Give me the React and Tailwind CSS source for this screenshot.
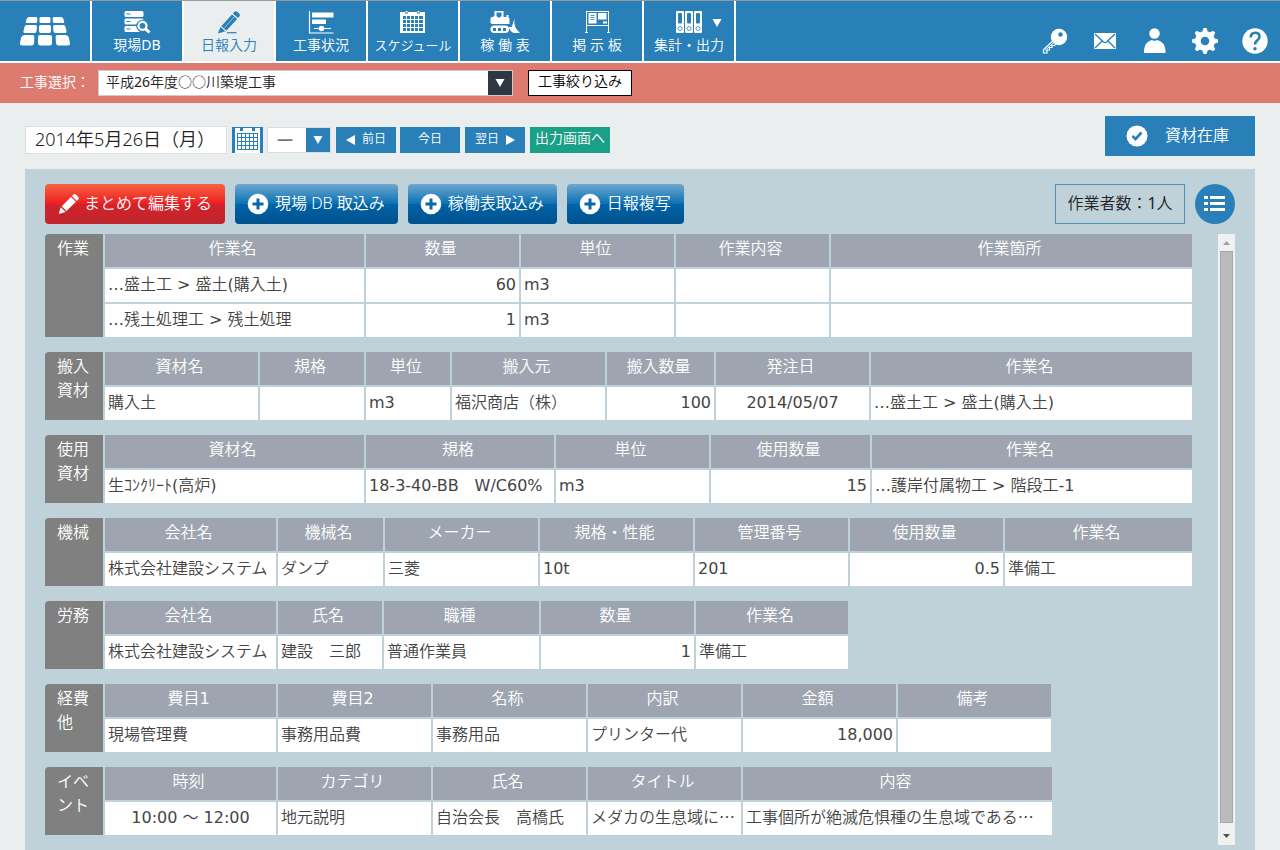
import { useState } from 'react';

const LogoIcon = () => (
  <svg width="52" height="32" viewBox="0 0 52 32" fill="#fff">
    <path d="M10 2h7q1.500 0 1.400 1.500l-.4 3.500q-.1 1-1.200 1H8q-1.600 0-1.200-1.500l1-3Q8.400 2 10 2z" />
    <path d="M22 2h8q1.500 0 1.500 1.500V7q0 1-1.500 1h-8q-1.500 0-1.500-1V3.500Q20.500 2 22 2z" />
    <path d="M35 2h7q1.600 0 2.200 1.500l1 3q.4 1.500-1.200 1.500h-8.800q-1.100 0-1.200-1l-.4-3.500Q33.500 2 35 2z" />
    <path d="M7.500 10h9q1.500 0 1.400 1.500l-.3 4.500q-.1 2-2 2H6.500q-2.500 0-2-2l1-4Q6 10 7.500 10z" />
    <path d="M21.500 10h9q1.500 0 1.500 1.500V16q0 2-2 2h-8q-2 0-2-2v-4.500q0-1.500 1.500-1.500z" />
    <path d="M35.500 10h9q1.500 0 2 2l1 4q.5 2-2 2h-9.100q-1.900 0-2-2l-.3-4.500q-.1-1.500 1.400-1.500z" />
    <path d="M5.500 20h8q2 0 1.900 2l-.4 6q-.2 2.500-2.500 2.500h-9Q.6 30.500 1 28l1.200-5.500Q3 20 5.500 20z" />
    <path d="M21 20h10q2 0 2 2v6q0 2.500-2.500 2.500h-9Q19 30.500 19 28v-6q0-2 2-2z" />
    <path d="M38.500 20h8q2.500 0 3.300 2.500L51 28q.4 2.500-2.500 2.500h-9q-2.300 0-2.500-2.500l-.4-6q-.1-2 1.900-2z" />
  </svg>
);

const DatabaseIcon = () => (
  <svg width="32" height="24" viewBox="0 0 32 24" fill="#fff">
    <rect x="3.500" y="1" width="19" height="6" rx="1.500" />
    <rect x="3.500" y="8.500" width="19" height="6" rx="1.500" />
    <rect x="3.500" y="16" width="19" height="6" rx="1.500" />
    <path d="M5.500 4h4M5.500 11.500h4M5.500 19h4" stroke="#2980b9" />
    <circle cx="21.500" cy="16" r="6.300" fill="#2980b9" />
    <circle cx="21.500" cy="15.800" r="4" fill="none" stroke="#fff" strokeWidth="2.200" />
    <path d="M24.500 18.800l4 3.700" stroke="#fff" strokeWidth="3" />
  </svg>
);

const PencilLineIcon = () => (
  <svg width="32" height="24" viewBox="0 0 32 24" fill="#2980b9">
    <path d="M21.500 1.800q1.200-1.200 2.400-.2l2.500 2.200q1.200 1.200.2 2.400l-1.600 1.800-5.200-4.500z" />
    <path d="M19 4.500l5.200 4.500L13.500 20.500l-5.200-4.300z" />
    <path d="M7.500 17l5 4.300-6.700 2q-.9 0-.6-.9z" />
    <path d="M11.500 17.800L21 7" stroke="#eaeeef" strokeWidth=".6" />
    <path d="M14 22.700h9.500" stroke="#2980b9" strokeWidth="1.200" />
  </svg>
);

const GanttIcon = () => (
  <svg width="32" height="24" viewBox="0 0 32 24" fill="#fff">
    <path d="M4.500 1v22.500M4 23h24.500" stroke="#fff" strokeWidth="1.200" />
    <rect x="7" y="2.500" width="21.500" height="5" />
    <rect x="7" y="9.500" width="14" height="4.500" />
    <path d="M9 18.500h17" stroke="#fff" />
    <circle cx="16.500" cy="18.500" r="2.700" />
  </svg>
);

const CalendarIcon = () => (
  <svg width="32" height="24" viewBox="0 0 32 24">
    <path d="M3 2h5v1.500h3V2h9v1.500h3V2h5v21H3z" fill="#fff" />
    <path d="M8.500 1h2v1.500h-2zM20.500 1h2v1.500h-2z" fill="#fff" />
    <rect x="6" y="6" width="20" height="15" fill="#2980b9" />
    <path
      d="M9.500 5v16M13.500 5v16M17.500 5v16M21.500 5v16M5 9.500h21M5 13.500h21M5 17.500h21"
      stroke="#fff"
      strokeWidth="1"
    />
  </svg>
);

const DateIcon = () => (
  <svg width="25" height="26" viewBox="0 0 25 26">
    <rect width="25" height="25" y="1" fill="#fff" />
    <path d="M5 0h3v4H5zM17 0h3v4h-3z" fill="#2980b9" />
    <path
      d="M2.500 6v17M6.500 6v17M10.500 6v17M14.500 6v17M18.500 6v17M22.500 6v17M2 6.500h21M2 10.500h21M2 14.500h21M2 18.500h21M2 22.500h21"
      stroke="#2980b9"
    />
  </svg>
);

const BulldozerIcon = () => (
  <svg width="32" height="24" viewBox="0 0 32 24" fill="#fff">
    <path d="M5.500 1h9v6h3V5h2v2.500l1 1V14H3l-1.500-1V8l1-1H4l1.500-1.500z" />
    <path d="M7.500 2.500h5V6L10 8 7.500 6z" fill="#2980b9" />
    <rect x="1.500" y="15.500" width="18.500" height="7.500" rx="3.700" />
    <path d="M4 18h3v3H4zM9 18h3v3H9zM14 18h3v3h-3z" fill="#2980b9" />
    <path d="M25.500 8.500q-1 5 1 9 1.500 3 4.500 5.500h-6q-4-1.500-4.500-5l2-.5z" />
    <path d="M20 18h3" stroke="#fff" strokeWidth="2" />
  </svg>
);

const BoardIcon = () => (
  <svg width="32" height="24" viewBox="0 0 32 24" fill="#fff">
    <path d="M5.500 1v21.500M27.500 1v21.500M5 1.500h23M5 15.500h23" stroke="#fff" fill="none" />
    <path d="M4 22.500h3M26 22.500h3" stroke="#fff" />
    <rect x="7.500" y="3" width="8" height="10.500" />
    <path d="M9.500 5.500h4M9.500 7.500h4M9.500 9.500h4" stroke="#2980b9" strokeWidth=".8" />
    <rect x="17" y="3" width="8.500" height="6.500" />
    <rect x="22" y="11.500" width="4" height="2" />
  </svg>
);

const BinderIcon = () => (
  <svg width="32" height="24" viewBox="0 0 32 24" fill="#fff">
    {[3, 12, 21].map((x) => (
      <g key={x}>
        <rect x={x} y="1" width="8" height="22" rx="1" />
        <rect x={x + 2} y="3" width="4" height="10.500" rx="1" fill="#2980b9" />
        <circle cx={x + 4} cy="18.500" r="2" fill="none" stroke="#2980b9" strokeWidth=".8" />
      </g>
    ))}
  </svg>
);

const KeyIcon = () => (
  <svg width="26" height="26" viewBox="0 0 26 26">
    <path
      d="M12 12L1.500 21.500v3.500H5v-3h2.500v-2.500H10v-2h2.500L15 15"
      fill="none"
      stroke="#fff"
      strokeWidth="1.200"
    />
    <path d="M3 22.500l10-9" stroke="#fff" />
    <circle cx="17" cy="9" r="8.200" fill="#fff" />
    <circle cx="18.500" cy="6.500" r="2.200" fill="#2980b9" />
  </svg>
);

const MailIcon = () => (
  <svg width="26" height="26" viewBox="0 0 26 26">
    <rect x="2" y="5" width="22" height="16" fill="#fff" />
    <path
      d="M3 6l8.500 8q1.500 1.200 3 0L23 6M3 20l7-7M23 20l-7-7"
      fill="none"
      stroke="#2980b9"
      strokeWidth="1.400"
    />
  </svg>
);

const UserIcon = () => (
  <svg width="26" height="26" viewBox="0 0 26 26" fill="#fff">
    <circle cx="12.500" cy="5.500" r="5.200" />
    <path d="M2 25v-3q1-8 7.500-10 3 1.500 6 0Q22.500 14 23.500 22v3z" />
  </svg>
);

const GearIcon = () => (
  <svg width="26" height="26" viewBox="0 0 26 26" fill="#fff">
    {[0, 45, 90, 135].map((angle) => (
      <path key={angle} d="M10.500 3l1-3h3l1 3v20l-1 3h-3l-1-3z" transform={`rotate(${angle} 13 13)`} />
    ))}
    <circle cx="13" cy="13" r="10" />
    <circle cx="13" cy="13" r="4.300" fill="#2980b9" />
  </svg>
);

const HelpIcon = () => (
  <svg width="26" height="26" viewBox="0 0 26 26">
    <circle cx="13" cy="13" r="12.700" fill="#fff" />
    <path
      d="M8.700 9.500q0-4.800 4.500-4.800 4.300 0 4.300 3.900 0 2.200-2.200 3.800-2.200 1.600-2.200 4.100"
      fill="none"
      stroke="#2980b9"
      strokeWidth="2.600"
    />
    <circle cx="13" cy="20.800" r="1.800" fill="#2980b9" />
  </svg>
);

const CheckCircleIcon = () => (
  <svg width="22" height="22" viewBox="0 0 22 22">
    <circle cx="11" cy="11" r="10.500" fill="#fff" />
    <path d="M6.500 11l3 3 6-6.500" fill="none" stroke="#2980b9" strokeWidth="2.600" />
  </svg>
);

const PlusCircleIcon = () => (
  <svg width="22" height="22" viewBox="0 0 22 22">
    <circle cx="11" cy="11" r="10.300" fill="#fff" />
    <path d="M11 5.500v11M5.500 11h11" stroke="#0a68a8" strokeWidth="3" />
  </svg>
);

const PencilIcon = () => (
  <svg width="22" height="22" viewBox="0 0 22 22" fill="#fff">
    <path d="M15.500 1.500q1.200-1 2.400 0l2.500 2.400q1 1.200 0 2.400l-1.600 1.600-4.900-4.900z" />
    <path d="M13 3.900l4.900 4.900L8.500 18l-4.800-4.800z" />
    <path d="M2.800 14.200l4.900 4.700-6.200 1.900q-.8 0-.6-.7z" />
  </svg>
);

const ListIcon = () => (
  <svg width="22" height="16" viewBox="0 0 22 16" fill="#fff">
    {[0, 6, 12].map((y) => (
      <g key={y}>
        <rect x="0" y={y} width="4" height="3" />
        <rect x="6" y={y} width="15" height="3" />
      </g>
    ))}
  </svg>
);

const Triangle = ({ dir = 'down', className = '' }) => {
  const paths = {
    down: 'M.5 1h9L5 9z',
    left: 'M9 0v10L0 5z',
    right: 'M1 0v10l9-5z',
  };
  return (
    <svg width="10" height="10" viewBox="0 0 10 10" fill="currentColor" className={className}>
      <path d={paths[dir]} />
    </svg>
  );
};

const navItems = [
  { id: 'db', label: '現場DB', icon: DatabaseIcon },
  { id: 'daily', label: '日報入力', icon: PencilLineIcon },
  { id: 'status', label: '工事状況', icon: GanttIcon },
  { id: 'schedule', label: 'スケジュール', icon: CalendarIcon, small: true },
  { id: 'operation', label: '稼 働 表', icon: BulldozerIcon },
  { id: 'board', label: '掲 示 板', icon: BoardIcon },
  { id: 'output', label: '集計・出力', icon: BinderIcon, menu: true },
];

const userItems = [
  { id: 'key', title: 'パスワード', icon: KeyIcon },
  { id: 'mail', title: 'メール', icon: MailIcon },
  { id: 'user', title: 'ユーザー', icon: UserIcon },
  { id: 'settings', title: '設定', icon: GearIcon },
  { id: 'help', title: 'ヘルプ', icon: HelpIcon },
];

// The last column of a full-width table has no width and takes what is left
const sections = [
  {
    title: '作業',
    width: 'w-full',
    columns: [
      { name: '作業名', width: 'w-[261px]' },
      { name: '数量', width: 'w-[155px]', align: 'right' },
      { name: '単位', width: 'w-[155px]' },
      { name: '作業内容', width: 'w-[155px]' },
      { name: '作業箇所' },
    ],
    rows: [
      ['…盛土工 > 盛土(購入土)', '60', 'm3', '', ''],
      ['…残土処理工 > 残土処理', '1', 'm3', '', ''],
    ],
  },
  {
    title: '搬入資材',
    width: 'w-full',
    columns: [
      { name: '資材名', width: 'w-[155px]' },
      { name: '規格', width: 'w-[106px]' },
      { name: '単位', width: 'w-[86px]' },
      { name: '搬入元', width: 'w-[155px]' },
      { name: '搬入数量', width: 'w-[109px]', align: 'right' },
      { name: '発注日', width: 'w-[155px]', align: 'center' },
      { name: '作業名' },
    ],
    rows: [['購入土', '', 'm3', '福沢商店（株）', '100', '2014/05/07', '…盛土工 > 盛土(購入土)']],
  },
  {
    title: '使用資材',
    width: 'w-full',
    columns: [
      { name: '資材名', width: 'w-[261px]' },
      { name: '規格', width: 'w-[190px]' },
      { name: '単位', width: 'w-[155px]' },
      { name: '使用数量', width: 'w-[161px]', align: 'right' },
      { name: '作業名' },
    ],
    rows: [['生ｺﾝｸﾘｰﾄ(高炉)', '18-3-40-BB　W/C60%', 'm3', '15', '…護岸付属物工 > 階段工-1']],
  },
  {
    title: '機械',
    width: 'w-full',
    columns: [
      { name: '会社名', width: 'w-[173px]' },
      { name: '機械名', width: 'w-[107px]' },
      { name: 'メーカー', width: 'w-[155px]' },
      { name: '規格・性能', width: 'w-[155px]' },
      { name: '管理番号', width: 'w-[155px]' },
      { name: '使用数量', width: 'w-[155px]', align: 'right' },
      { name: '作業名' },
    ],
    rows: [['株式会社建設システム', 'ダンプ', '三菱', '10t', '201', '0.5', '準備工']],
  },
  {
    title: '労務',
    width: 'w-[803px]',
    columns: [
      { name: '会社名', width: 'w-[173px]' },
      { name: '氏名', width: 'w-[106px]' },
      { name: '職種', width: 'w-[157px]' },
      { name: '数量', width: 'w-[155px]', align: 'right' },
      { name: '作業名' },
    ],
    rows: [['株式会社建設システム', '建設　三郎', '普通作業員', '1', '準備工']],
  },
  {
    title: '経費他',
    width: 'w-[1006px]',
    columns: [
      { name: '費目1', width: 'w-[173px]' },
      { name: '費目2', width: 'w-[155px]' },
      { name: '名称', width: 'w-[155px]' },
      { name: '内訳', width: 'w-[155px]' },
      { name: '金額', width: 'w-[155px]', align: 'right' },
      { name: '備考' },
    ],
    rows: [['現場管理費', '事務用品費', '事務用品', 'プリンター代', '18,000', '']],
  },
  {
    title: 'イベント',
    width: 'w-[1007px]',
    columns: [
      { name: '時刻', width: 'w-[173px]', align: 'center' },
      { name: 'カテゴリ', width: 'w-[155px]' },
      { name: '氏名', width: 'w-[155px]' },
      { name: 'タイトル', width: 'w-[155px]', cjk: true },
      { name: '内容', cjk: true },
    ],
    rows: [
      [
        '10:00 ～ 12:00',
        '地元説明',
        '自治会長　高橋氏',
        'メダカの生息域に…',
        '工事個所が絶滅危惧種の生息域である…',
      ],
    ],
  },
];

const alignClasses = {
  left: 'text-left',
  right: 'text-right',
  center: 'text-center',
};

const SectionTable = ({ section }) => (
  <table className={`table-fixed border-separate border-spacing-0 text-base ${section.width}`}>
    <colgroup>
      <col className="w-[58px]" />
      {section.columns.map((column, i) => (
        <col key={i} className={column.width} />
      ))}
    </colgroup>
    <tbody>
      <tr className="h-[33px]">
        <th
          scope="rowgroup"
          rowSpan={section.rows.length + 1}
          className="rounded-tl bg-[#808080] pb-0 pl-3 pr-1 pt-[3px] text-left align-top font-normal leading-6 text-white"
        >
          {section.title}
        </th>
        {section.columns.map((column) => (
          <th
            key={column.name}
            scope="col"
            className="border-l-2 border-[#c0d2d9] bg-[#9ea5b0] pb-1 pl-0 pr-1 pt-0 font-normal leading-6 text-white"
          >
            {column.name}
          </th>
        ))}
      </tr>
      {section.rows.map((row, r) => (
        <tr key={r} className="h-[35px]">
          {row.map((value, i) => {
            const column = section.columns[i];
            return (
              <td
                key={i}
                className={`overflow-hidden whitespace-nowrap border-l-2 border-t-2 border-[#c0d2d9] bg-white px-[3px] pt-0 leading-6 text-[#444] ${
                  alignClasses[column.align || 'left']
                } ${
                  column.cjk
                    ? "pb-[6px] font-['Noto_Sans_CJK_JP_DemiLight','Noto_Sans_CJK_JP',sans-serif]"
                    : 'pb-[2px]'
                }`}
              >
                {value}
              </td>
            );
          })}
        </tr>
      ))}
    </tbody>
  </table>
);

const BlueButton = ({ children }) => (
  <button className="flex h-10 items-center gap-[6px] rounded-sm bg-[linear-gradient(#6ea8d0,#0a70b2_50%,#0064a6_50%,#00508e)] pl-3 pr-[13px] text-base text-white">
    <PlusCircleIcon />
    <span className="pb-[2px]">{children}</span>
  </button>
);

const App = () => {
  const [activeTab, setActiveTab] = useState('daily');
  const [date, setDate] = useState('2014年5月26日（月）');

  return (
    <div
      lang="ja"
      className="flex min-h-screen flex-col bg-[#eaeeef] font-['Noto_Sans','Noto_Sans_CJK_JP_DemiLight','Noto_Sans_CJK_JP',sans-serif]"
    >
      {/* Header */}
      <header className="flex justify-between border-b-2 border-t border-b-white border-t-[#999] bg-[#2980b9]">
        <nav className="flex">
          <a
            href="#home"
            aria-label="ホーム"
            className="flex h-[60px] w-[92px] items-center justify-center border-r-2 border-white"
          >
            <LogoIcon />
          </a>
          {navItems.map((item) => {
            const Icon = item.icon;
            const active = item.id === activeTab;
            return (
              <button
                key={item.id}
                onClick={() => setActiveTab(item.id)}
                className={`relative flex h-[60px] w-[92px] flex-col items-center border-r-2 border-white pt-[9px] ${
                  active ? 'bg-[#eaeeef] text-[#2980b9]' : 'text-white'
                }`}
              >
                <Icon />
                <span
                  className={`whitespace-nowrap leading-[22px] ${item.small ? 'text-[13px]' : 'text-sm'}`}
                >
                  {item.label}
                </span>
                {item.menu && <Triangle className="absolute right-3 top-[17px]" />}
              </button>
            );
          })}
        </nav>
        <div className="flex items-center gap-6 pr-3 pt-5">
          {userItems.map((item) => {
            const Icon = item.icon;
            return (
              <button key={item.id} aria-label={item.title}>
                <Icon />
              </button>
            );
          })}
        </div>
      </header>

      {/* Construction select */}
      <div className="flex h-10 items-center bg-[#de7b71] pl-5 text-sm">
        <label htmlFor="construction" className="w-[78px] whitespace-nowrap pb-[2px] text-white">
          工事選択：
        </label>
        <div className="relative">
          <select
            id="construction"
            className="block h-[26px] w-[415px] appearance-none border border-[#ccc] bg-white pb-[2px] pl-[7px] leading-5 text-[#222]"
          >
            <option>平成26年度○○川築堤工事</option>
          </select>
          <span className="pointer-events-none absolute right-px top-px flex h-6 w-6 items-center justify-center bg-[#2f3742] text-white">
            <Triangle />
          </span>
        </div>
        <button className="ml-[15px] h-[26px] w-[104px] whitespace-nowrap border border-black bg-white pb-1 leading-5 text-black">
          工事絞り込み
        </button>
      </div>

      <main className="flex flex-1 flex-col px-[25px] pt-[13px]">
        {/* Date bar */}
        <div className="mb-[13px] flex items-start justify-between">
          <div className="flex items-center pt-[10px]">
            <input
              type="text"
              aria-label="日付"
              value={date}
              onChange={(e) => setDate(e.target.value)}
              className="h-7 w-[202px] border border-[#ddd] bg-white pb-1 pl-[9px] text-lg font-light leading-6 text-[#222]"
            />
            <button
              aria-label="カレンダー"
              className="ml-[5px] flex h-[26px] w-[31px] items-center justify-center bg-[#2980b9]"
            >
              <DateIcon />
            </button>
            <div className="relative ml-1">
              <select
                aria-label="天気"
                className="block h-[26px] w-16 appearance-none border border-[#ddd] bg-white pb-1 pl-[9px] text-base font-bold leading-5 text-[#777]"
              >
                <option>―</option>
              </select>
              <span className="pointer-events-none absolute right-px top-px flex h-6 w-6 items-center justify-center bg-[#2980b9] text-white">
                <Triangle />
              </span>
            </div>
            <button className="ml-[5px] flex h-[26px] w-[60px] items-center justify-center gap-[6px] bg-[#2980b9] text-xs text-white">
              <Triangle dir="left" />
              <span className="pb-[2px]">前日</span>
            </button>
            <button className="ml-1 h-[26px] w-[60px] bg-[#2980b9] pb-[2px] text-xs text-white">
              今日
            </button>
            <button className="ml-[5px] flex h-[26px] w-[60px] items-center justify-center gap-[6px] bg-[#2980b9] text-xs text-white">
              <span className="pb-[2px]">翌日</span>
              <Triangle dir="right" />
            </button>
            <button className="ml-[5px] h-[26px] w-20 bg-[#1aa086] pb-1 text-sm leading-5 text-white">
              出力画面へ
            </button>
          </div>
          <button className="flex h-10 w-[150px] items-center bg-[#2980b9] pl-[21px] text-base text-white">
            <CheckCircleIcon />
            <span className="ml-[17px] pb-[2px]">資材在庫</span>
          </button>
        </div>

        {/* Daily report panel */}
        <section className="flex flex-1 flex-col bg-[#c0d2d9] px-5 pb-[5px] pt-[15px]">
          <div className="mb-[10px] flex justify-between">
            <div className="flex gap-[10px] font-light">
              <button className="flex h-10 w-[180px] items-center gap-1 rounded-sm bg-[linear-gradient(#f4653f,#ee1c24_50%,#d3222a_50%,#be252d)] pl-[13px] text-base text-white">
                <PencilIcon />
                <span className="pb-[2px]">まとめて編集する</span>
              </button>
              <BlueButton>現場 DB 取込み</BlueButton>
              <BlueButton>稼働表取込み</BlueButton>
              <BlueButton>日報複写</BlueButton>
            </div>
            <div className="flex gap-[10px]">
              <div className="flex h-10 w-[130px] items-center justify-center border border-[#4f90ba] pb-[2px] text-base text-[#222]">
                作業者数：1人
              </div>
              <button
                aria-label="一覧"
                className="flex h-10 w-10 items-center justify-center rounded-full bg-[#2980b9]"
              >
                <ListIcon />
              </button>
            </div>
          </div>

          <div className="flex flex-1">
            <div className="flex flex-1 flex-col gap-[15px] pb-[10px] pr-[26px] font-['DejaVu_Sans','Noto_Sans_CJK_JP_DemiLight','Noto_Sans_CJK_JP',sans-serif]">
              {sections.map((section) => (
                <SectionTable key={section.title} section={section} />
              ))}
            </div>

            {/* Scrollbar */}
            <div className="flex w-[17px] flex-col items-center bg-[#f1f1f1]">
              <div className="flex h-[17px] items-center text-[#a0a0a0]">
                <svg width="7" height="4" viewBox="0 0 7 4" fill="currentColor">
                  <path d="M0 4h7L3.500 0z" />
                </svg>
              </div>
              <div className="w-[13px] flex-1 border border-[#a8a8a8] bg-[#bbb]" />
              <div className="flex h-[22px] items-center pt-1 text-[#505050]">
                <svg width="7" height="4" viewBox="0 0 7 4" fill="currentColor">
                  <path d="M0 0h7L3.500 4z" />
                </svg>
              </div>
            </div>
          </div>
        </section>
      </main>
    </div>
  );
};

export default App;
